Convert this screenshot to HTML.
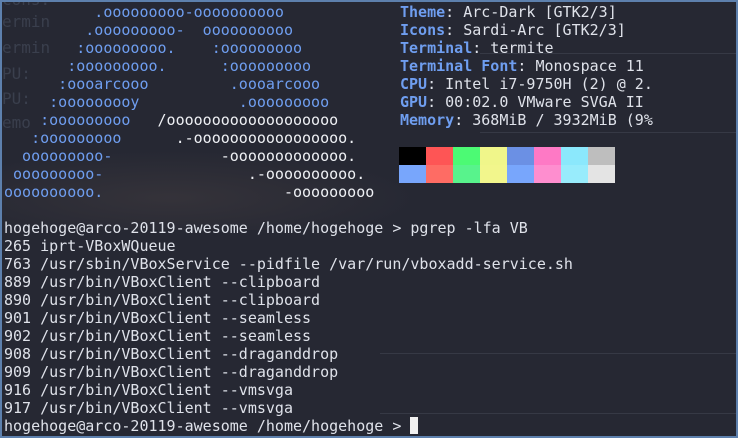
<!DOCTYPE html>
<html><head><meta charset="utf-8"><style>
html,body{margin:0;padding:0}
body{width:738px;height:438px;overflow:hidden;background:#262833;position:relative;font-family:"DejaVu Sans Mono","Liberation Mono",monospace;font-size:15px}
.frame{position:absolute;left:0;top:0;width:734px;height:434px;border:2px solid #5d80ad}
.bgd{position:absolute;left:2px;top:150px;width:420px;height:80px;background:radial-gradient(ellipse at 40% 60%,rgba(80,70,70,.35),rgba(0,0,0,0) 70%)}
.ln{position:absolute;left:4px;white-space:pre;line-height:18px;height:18px;color:#dfe2ea}
.b{color:#6f9ef0}.w{color:#eef0f4}.l{color:#6f9ef0;font-weight:bold}
.sw{position:absolute;width:27px;height:18px}
.hl{position:absolute;height:1px;background:#363945}
.ghost{position:absolute;left:2px;white-space:pre;color:#3a3f4d;line-height:18px;font-size:16px}
</style></head><body>
<div class="bgd"></div>
<div class="hl" style="left:480px;top:53px;width:256px"></div>
<div class="hl" style="left:480px;top:132px;width:256px"></div>
<div class="hl" style="left:380px;top:353px;width:356px"></div>
<div class="hl" style="left:380px;top:413px;width:356px"></div>
<div class="ghost" style="top:-9px">cons:</div>
<div class="ghost" style="top:13px">ermin</div>
<div class="ghost" style="top:39px">ermin</div>
<div class="ghost" style="top:65px">PU:</div>
<div class="ghost" style="top:90px">PU:</div>
<div class="ghost" style="top:114px">emo</div>

<div class="ln b" style="top:3px">          .ooooooooo-oooooooooo</div>
<div class="ln b" style="top:21px">         .ooooooooo-  oooooooooo</div>
<div class="ln b" style="top:39px">        :ooooooooo.    :ooooooooo</div>
<div class="ln b" style="top:57px">       :ooooooooo.      :ooooooooo</div>
<div class="ln b" style="top:75px">      :oooarcooo         .oooarcooo</div>
<div class="ln b" style="top:93px">     :ooooooooy           .ooooooooo</div>
<div class="ln" style="top:111px"><span class="b">    :ooooooooo   </span><span class="w">/ooooooooooooooooooo</span></div>
<div class="ln" style="top:129px"><span class="b">   :ooooooooo      </span><span class="w">.-ooooooooooooooooo.</span></div>
<div class="ln" style="top:147px"><span class="b">  ooooooooo-            </span><span class="w">-ooooooooooooo.</span></div>
<div class="ln" style="top:165px"><span class="b"> ooooooooo-                </span><span class="w">.-oooooooooo.</span></div>
<div class="ln" style="top:183px"><span class="b">oooooooooo.                    </span><span class="w">-ooooooooo</span></div>

<div class="ln" style="top:3px;left:400px"><span class="l">Theme</span>: Arc-Dark [GTK2/3]</div>
<div class="ln" style="top:21px;left:400px"><span class="l">Icons</span>: Sardi-Arc [GTK2/3]</div>
<div class="ln" style="top:39px;left:400px"><span class="l">Terminal</span>: termite</div>
<div class="ln" style="top:57px;left:400px"><span class="l">Terminal Font</span>: Monospace 11</div>
<div class="ln" style="top:75px;left:400px"><span class="l">CPU</span>: Intel i7-9750H (2) @ 2.</div>
<div class="ln" style="top:93px;left:400px"><span class="l">GPU</span>: 00:02.0 VMware SVGA II</div>
<div class="ln" style="top:111px;left:400px"><span class="l">Memory</span>: 368MiB / 3932MiB (9%</div>

<div class="sw" style="left:399px;top:147px;background:#000"></div>
<div class="sw" style="left:426px;top:147px;background:#fe5555"></div>
<div class="sw" style="left:453px;top:147px;background:#4cfa74"></div>
<div class="sw" style="left:480px;top:147px;background:#f0f68a"></div>
<div class="sw" style="left:507px;top:147px;background:#6b90e4"></div>
<div class="sw" style="left:534px;top:147px;background:#fe79c5"></div>
<div class="sw" style="left:561px;top:147px;background:#8be8fc"></div>
<div class="sw" style="left:588px;top:147px;background:#bebebe"></div>
<div class="sw" style="left:399px;top:165px;background:#78a6fc"></div>
<div class="sw" style="left:426px;top:165px;background:#fe6c64"></div>
<div class="sw" style="left:453px;top:165px;background:#58f38c"></div>
<div class="sw" style="left:480px;top:165px;background:#f2f68c"></div>
<div class="sw" style="left:507px;top:165px;background:#78a6fc"></div>
<div class="sw" style="left:534px;top:165px;background:#fe8ecf"></div>
<div class="sw" style="left:561px;top:165px;background:#98ecfc"></div>
<div class="sw" style="left:588px;top:165px;background:#e4e4e4"></div>

<div class="ln" style="top:219px">hogehoge@arco-20119-awesome /home/hogehoge &gt; pgrep -lfa VB</div>
<div class="ln" style="top:237px">265 iprt-VBoxWQueue</div>
<div class="ln" style="top:255px">763 /usr/sbin/VBoxService --pidfile /var/run/vboxadd-service.sh</div>
<div class="ln" style="top:273px">889 /usr/bin/VBoxClient --clipboard</div>
<div class="ln" style="top:291px">890 /usr/bin/VBoxClient --clipboard</div>
<div class="ln" style="top:309px">901 /usr/bin/VBoxClient --seamless</div>
<div class="ln" style="top:327px">902 /usr/bin/VBoxClient --seamless</div>
<div class="ln" style="top:345px">908 /usr/bin/VBoxClient --draganddrop</div>
<div class="ln" style="top:363px">909 /usr/bin/VBoxClient --draganddrop</div>
<div class="ln" style="top:381px">916 /usr/bin/VBoxClient --vmsvga</div>
<div class="ln" style="top:399px">917 /usr/bin/VBoxClient --vmsvga</div>
<div class="ln" style="top:417px">hogehoge@arco-20119-awesome /home/hogehoge &gt; <span style="display:inline-block;width:8px;height:17px;background:#f0f0f0;vertical-align:-3px"></span></div>
<div class="frame"></div>
</body></html>
